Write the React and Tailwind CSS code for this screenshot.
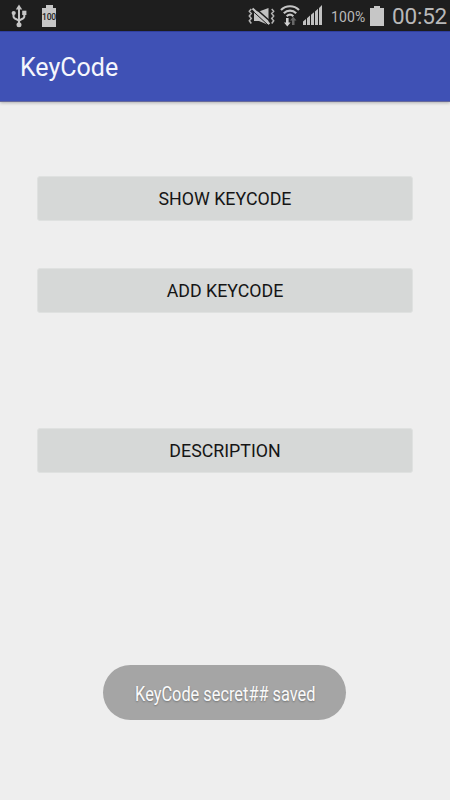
function UsbIcon() {
  return (
    <svg className="ml-[11px] h-6 w-4 shrink-0" viewBox="0 0 16 24" fill="none" stroke="#c6c6c6" strokeWidth="2">
      <path d="M8 4v16M2.500 9v3.500c0 3 5.500 2.500 5.500 5M13.300 9v3.500c0 3-5.300 2.500-5.300 5" />
      <path d="M8 0.500 11.200 5.500H4.800z" fill="#c6c6c6" stroke="none" />
      <circle cx="2.700" cy="9" r="2.100" fill="#c6c6c6" stroke="none" />
      <path d="M11.200 6.700H15.400V11H11.200z" fill="#c6c6c6" stroke="none" />
      <circle cx="8" cy="20.800" r="2.500" fill="#c6c6c6" stroke="none" />
    </svg>
  );
}

function MuteIcon() {
  return (
    <svg className="mt-px h-[19px] w-[27px] shrink-0" viewBox="0 0 27 19" fill="none">
      <path d="M6 4.500h5l9.500-3.500v17l-9.500-4H6z" fill="#c2c2c2" />
      <path d="M6.500 0.500 23 15" stroke="#1e1e1e" strokeWidth="1.500" />
      <path d="M4.500 1.500 21.500 17" stroke="#c6c6c6" strokeWidth="2" />
      <path d="M4.500 3.800 20 18" stroke="#1e1e1e" strokeWidth="1" />
      <path d="M3.300 2 1.300 4.300 3.300 6.600 1.300 9 3.300 11.400 1.300 13.700 3.300 16.500M23.700 2l2 2.300-2 2.300L25.700 9l-2 2.400 2 2.300-2 2.800" stroke="#b4b4b4" strokeWidth="1.500" />
    </svg>
  );
}

function WifiIcon() {
  return (
    <svg className="ml-[5px] h-[22px] w-5 shrink-0" viewBox="0 0 20 22" fill="none" stroke="#c6c6c6" strokeWidth="2.200">
      <path d="M1 5C6 0 14 0 19 5M3.800 8.300c3.500-3.500 8.900-3.500 12.400 0M6.700 11.200c2-1.800 4.600-1.800 6.600 0" />
      <path d="M6 13h2.600v4.500h2L7.300 21.600 4 17.500h2z" fill="#d0d0d0" stroke="none" />
      <path d="M12 20v-4.500h-2l3.200-3.700 3.300 3.700h-2V20z" fill="#686868" stroke="none" />
    </svg>
  );
}

function SignalIcon() {
  return (
    <svg className="mb-px ml-[3px] h-5 w-5 shrink-0" viewBox="0 0 20 20" fill="#c2c2c2">
      <path d="M0 16.500 3 14v6H0zM4 13.200l3-2.700V20H4zM8 9.800l3-2.600V20H8zM12 6.400l3-2.700V20H12zM16 3 19 0v20H16z" />
    </svg>
  );
}

function StatusBar() {
  return (
    <header className="flex h-[31px] shrink-0 items-center bg-[#1e1e1e] font-[Roboto,sans-serif] text-[#b9b9b9]">
      <UsbIcon />
      <div className="ml-[15px] flex flex-col items-center">
        <span className="h-[3px] w-[7px] bg-[#c6c6c6]" />
        <span className="flex h-[19px] w-[14px] items-center justify-center bg-[#c6c6c6] text-[8.5px] font-medium leading-none tracking-[-0.2px] text-[#1e1e1e]">
          100
        </span>
      </div>
      <div className="ml-[192px] flex items-center">
        <MuteIcon />
        <WifiIcon />
        <SignalIcon />
      </div>
      <span className="ml-[8px] mt-[2px] w-[34px] whitespace-nowrap text-[14px] leading-none tracking-[0.1px]">100%</span>
      <div className="ml-[5px] flex flex-col items-center">
        <span className="h-[2px] w-[6px] bg-[#c6c6c6]" />
        <span className="h-[18px] w-[14px] bg-[#c6c6c6]" />
      </div>
      <span className="ml-[8px] mt-px whitespace-nowrap text-[22.5px] leading-none tracking-[-0.2px]">00:52</span>
    </header>
  );
}

function ActionButton({ children, className }) {
  return (
    <button className={`mx-[37px] flex h-[45px] shrink-0 items-center justify-center rounded-[3px] border border-[#dfe1e0] bg-[#d6d8d7] text-[17.8px] leading-none text-[#151515] ${className}`}>
      <span className="pt-px">{children}</span>
    </button>
  );
}

export default function App() {
  return (
    <div className="flex h-[800px] w-[450px] flex-col overflow-hidden bg-[#eeeeee] font-[Roboto,sans-serif]">
      <StatusBar />
      <div className="flex h-[71px] shrink-0 items-center border-t border-b border-t-[#303f9f] border-b-[#66699b] bg-[#3f51b5] pl-5 shadow-[0_1px_3px_rgba(0,0,0,0.25)]">
        <h1 className="pt-px text-[25px] leading-none text-[#f5f6fc]">KeyCode</h1>
      </div>
      <main className="flex flex-1 flex-col">
        <ActionButton className="mt-[74px]">SHOW KEYCODE</ActionButton>
        <ActionButton className="mt-[47px]">ADD KEYCODE</ActionButton>
        <ActionButton className="mt-[115px]">DESCRIPTION</ActionButton>
        <div className="mt-[192px] ml-[103px] flex h-[55px] w-[243px] items-center justify-center rounded-full bg-[#a5a5a5]">
          <span className="origin-center scale-x-[0.817] whitespace-nowrap pt-[3px] pl-px text-[20px] leading-none text-[#fafafa] [text-shadow:0_1px_2px_rgba(0,0,0,0.3)]">KeyCode secret## saved</span>
        </div>
      </main>
    </div>
  );
}
